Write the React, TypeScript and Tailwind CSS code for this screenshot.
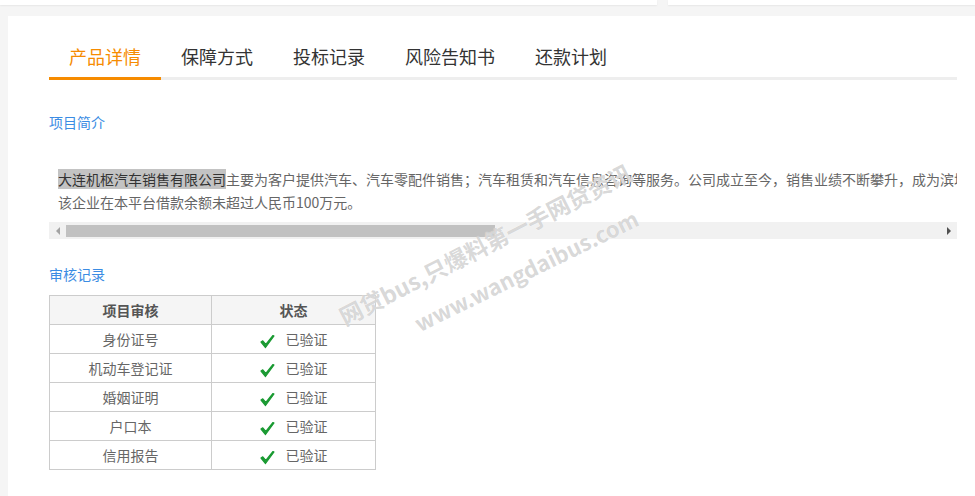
import React from 'react';

const tabs = ['产品详情', '保障方式', '投标记录', '风险告知书', '还款计划'];
const rows = ['身份证号', '机动车登记证', '婚姻证明', '户口本', '信用报告'];

function Check() {
  return (
    <svg width="15" height="15" viewBox="0 0 15 15" className="shrink-0 mt-[4px]">
      <path d="M1 8 L5.5 13.5 L14 2 L13 1.5 L5.8 10.4 L2.8 6.8 Z" fill="#1a9a32" stroke="#1a9a32" strokeWidth="1.2" strokeLinejoin="round" />
    </svg>
  );
}

export default function App() {
  return (
    <div
      className="relative w-[975px] h-[496px] overflow-hidden bg-[#f5f5f5]"
      style={{ fontFamily: '"Noto Sans CJK SC", "Noto Sans", sans-serif' }}
    >
      {/* top cards, cut off by the viewport */}
      <div className="flex gap-[11px] h-[5px]">
        <div className="w-[657px] bg-white shadow-[0_1px_2px_rgba(0,0,0,0.06)]" />
        <div className="flex-1 bg-white shadow-[0_1px_2px_rgba(0,0,0,0.06)]" />
      </div>

      {/* main panel */}
      <div className="ml-2 mt-[11px] w-[990px] h-[600px] bg-white pl-[41px] pt-[28px]">
        <div className="w-[908px]">
          {/* tabs */}
          <div className="flex border-b-[3px] border-[#eeeeee]">
            {tabs.map((t, i) => (
              <div
                key={t}
                className={
                  i === 0
                    ? 'px-5 pb-[8px] -mb-[3px] border-b-[3px] border-[#f68b00] text-[18px] leading-[25px] text-[#f68b00]'
                    : 'px-5 pb-[8px] text-[18px] leading-[25px] text-[#333333]'
                }
              >
                {t}
              </div>
            ))}
          </div>

          {/* 项目简介 */}
          <div className="mt-[32px] text-[14px] leading-[20px] text-[#3b8ce3]">项目简介</div>

          <div className="mt-[36px] overflow-hidden pl-[9px] text-[14px] leading-[23px] text-[#666666]">
            <div className="whitespace-nowrap">
              <span className="bg-[#c3c3c3] text-[#333333]">大连机枢汽车销售有限公司</span>
              主要为客户提供汽车、汽车零配件销售；汽车租赁和汽车信息咨询等服务。公司成立至今，销售业绩不断攀升，成为滨城知名的汽车销售服务企业之一。
            </div>
            <div className="whitespace-nowrap">该企业在本平台借款余额未超过人民币100万元。</div>
          </div>

          {/* horizontal scrollbar */}
          <div className="mt-[8px] flex items-center h-[17px] bg-[#f1f1f1]">
            <div className="w-[17px] h-full flex items-center justify-center">
              <div className="w-0 h-0 border-y-[4px] border-y-transparent border-r-[4px] border-r-[#a3a3a3]" />
            </div>
            <div className="w-[429px] h-[12px] bg-[#c1c1c1]" />
            <div className="flex-1" />
            <div className="w-[17px] h-full flex items-center justify-center">
              <div className="w-0 h-0 border-y-[4px] border-y-transparent border-l-[4px] border-l-[#505050]" />
            </div>
          </div>

          {/* 审核记录 */}
          <div className="mt-[25px] text-[14px] leading-[20px] text-[#3b8ce3]">审核记录</div>

          <table className="mt-[11px] border-collapse text-[14px] text-[#666666]">
            <thead>
              <tr className="h-[29px] bg-[#f5f5f5]">
                <th className="w-[162px] border border-[#cccccc] font-bold text-[#555555]">项目审核</th>
                <th className="w-[164px] border border-[#cccccc] font-bold text-[#555555]">状态</th>
              </tr>
            </thead>
            <tbody>
              {rows.map((r) => (
                <tr key={r} className="h-[29px]">
                  <td className="border border-[#cccccc] text-center">{r}</td>
                  <td className="border border-[#cccccc]">
                    <div className="flex items-center justify-center gap-[11px]">
                      <Check />
                      <span>已验证</span>
                    </div>
                  </td>
                </tr>
              ))}
            </tbody>
          </table>
        </div>
      </div>

      {/* watermark overlay */}
      <div className="pointer-events-none absolute left-[485px] top-[244px] -translate-x-1/2 -translate-y-1/2 -rotate-[27deg] whitespace-nowrap text-[23px] font-bold text-[#9a9a9a]/40 [text-shadow:0_0_1px_#fff]">
        网贷bus,只爆料第一手网贷资讯
      </div>
      <div className="pointer-events-none absolute left-[526px] top-[270px] -translate-x-1/2 -translate-y-1/2 -rotate-[26deg] whitespace-nowrap text-[22px] font-bold text-[#9a9a9a]/40 [text-shadow:0_0_1px_#fff]">
        www.wangdaibus.com
      </div>
    </div>
  );
}
